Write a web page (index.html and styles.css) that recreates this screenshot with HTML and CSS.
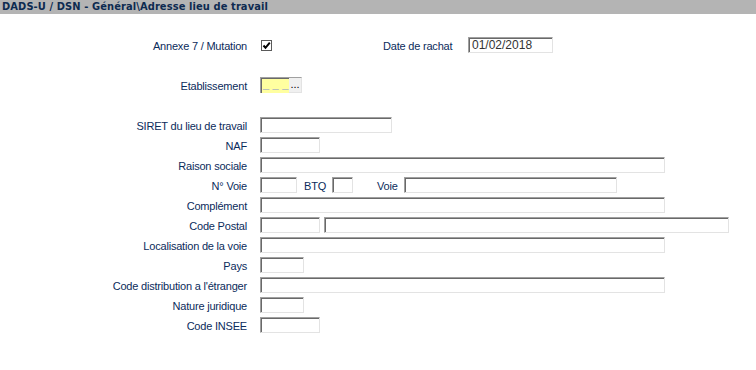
FILE: index.html
```html
<!DOCTYPE html>
<html lang="fr">
<head>
<meta charset="utf-8">
<title>Adresse lieu de travail</title>
<link rel="stylesheet" href="styles.css">
</head>
<body>
<div class="titlebar">DADS-U / DSN - Général\Adresse lieu de travail</div>
<div class="form">
  <div class="row row-top">
    <span class="label">Annexe 7 / Mutation</span>
    <span class="check"><svg width="9" height="9" viewBox="0 0 9 9"><path d="M1.5 4.5 L3.5 6.8 L7.8 1.6" fill="none" stroke="#000" stroke-width="2"/></svg></span>
    <span class="label-inline date-label">Date de rachat</span>
    <span class="box w-date">01/02/2018</span>
  </div>
  <div class="row row-etab">
    <span class="label">Etablissement</span>
    <span class="etab">_ _ _</span><span class="etab-btn">...</span>
  </div>
  <div class="row"><span class="label">SIRET du lieu de travail</span><span class="box w-siret"></span></div>
  <div class="row"><span class="label">NAF</span><span class="box w-60"></span></div>
  <div class="row"><span class="label">Raison sociale</span><span class="box w-long"></span></div>
  <div class="row">
    <span class="label">N° Voie</span><span class="box w-num"></span>
    <span class="label-inline btq-label">BTQ</span><span class="box w-btq"></span>
    <span class="label-inline voie-label">Voie</span><span class="box w-voie"></span>
  </div>
  <div class="row"><span class="label">Complément</span><span class="box w-long"></span></div>
  <div class="row"><span class="label">Code Postal</span><span class="box w-60"></span><span class="box w-ville"></span></div>
  <div class="row"><span class="label">Localisation de la voie</span><span class="box w-long"></span></div>
  <div class="row"><span class="label">Pays</span><span class="box w-44"></span></div>
  <div class="row"><span class="label">Code distribution a l'étranger</span><span class="box w-long"></span></div>
  <div class="row"><span class="label">Nature juridique</span><span class="box w-44"></span></div>
  <div class="row"><span class="label">Code INSEE</span><span class="box w-60"></span></div>
</div>
</body>
</html>
```

FILE: styles.css
```css
html, body {
  margin: 0;
  padding: 0;
  background: #ffffff;
}
body {
  font-family: "Liberation Sans", Arial, sans-serif;
  font-size: 11px;
  color: #0b2b5b;
}
.titlebar {
  height: 14px;
  line-height: 14px;
  background: #b4b4b4;
  color: #0d2a50;
  font-family: "DejaVu Sans Condensed", "DejaVu Sans", sans-serif;
  font-weight: bold;
  font-size: 11px;
  letter-spacing: 0.1px;
  padding-left: 2px;
  white-space: nowrap;
}
.form {
  display: flex;
  flex-direction: column;
  padding-top: 23px;
}
.row {
  display: flex;
  align-items: center;
  height: 16px;
  margin-bottom: 4px;
}
.row-top, .row-etab {
  margin-bottom: 24px;
}
.label {
  width: 247px;
  text-align: right;
  margin-right: 13px;
  white-space: nowrap;
  flex: none;
  letter-spacing: -0.2px;
  line-height: 14px;
  padding-top: 2px;
}
.label-inline {
  white-space: nowrap;
  flex: none;
  letter-spacing: -0.2px;
  line-height: 14px;
  padding-top: 2px;
}
.box {
  box-sizing: border-box;
  height: 16px;
  flex: none;
  border-top: 1px solid #a0a0a0;
  border-left: 1px solid #a0a0a0;
  border-right: 1px solid #e3e3e3;
  border-bottom: 1px solid #e3e3e3;
  box-shadow: inset 1px 1px 0 #696969;
  background: #ffffff;
  color: #333333;
  line-height: 14px;
  padding-left: 3px;
  font-size: 12px;
}
.check {
  box-sizing: border-box;
  width: 11px;
  height: 11px;
  margin-left: 1px;
  border: 1px solid #5a5a5a;
  background: #ffffff;
  display: flex;
  align-items: center;
  justify-content: center;
  flex: none;
}
.date-label {
  margin-left: 111px;
  width: 85px;
}
.w-date { width: 85px; }
.etab {
  box-sizing: border-box;
  width: 29px;
  height: 16px;
  background: #ffffa0;
  border-top: 1px solid #a0a0a0;
  border-left: 1px solid #a0a0a0;
  box-shadow: inset 1px 1px 0 #696969;
  color: #a8b0c0;
  font-size: 11px;
  line-height: 13px;
  padding-left: 2px;
  letter-spacing: 0.2px;
  white-space: nowrap;
  flex: none;
}
.etab-btn {
  box-sizing: border-box;
  width: 13px;
  height: 16px;
  background: #f0f0f0;
  border-right: 1px solid #e3e3e3;
  border-bottom: 1px solid #e3e3e3;
  border-top: 1px solid #a0a0a0;
  color: #000000;
  font-size: 11px;
  line-height: 13px;
  text-align: center;
  flex: none;
}
.w-siret { width: 132px; }
.w-60 { width: 60px; }
.w-44 { width: 44px; }
.w-long { width: 405px; }
.w-num { width: 37px; }
.btq-label { margin-left: 7px; width: 28px; }
.w-btq { width: 21px; }
.voie-label { margin-left: 24px; width: 27px; }
.w-voie { width: 213px; }
.w-ville { width: 405px; margin-left: 4px; }
```
